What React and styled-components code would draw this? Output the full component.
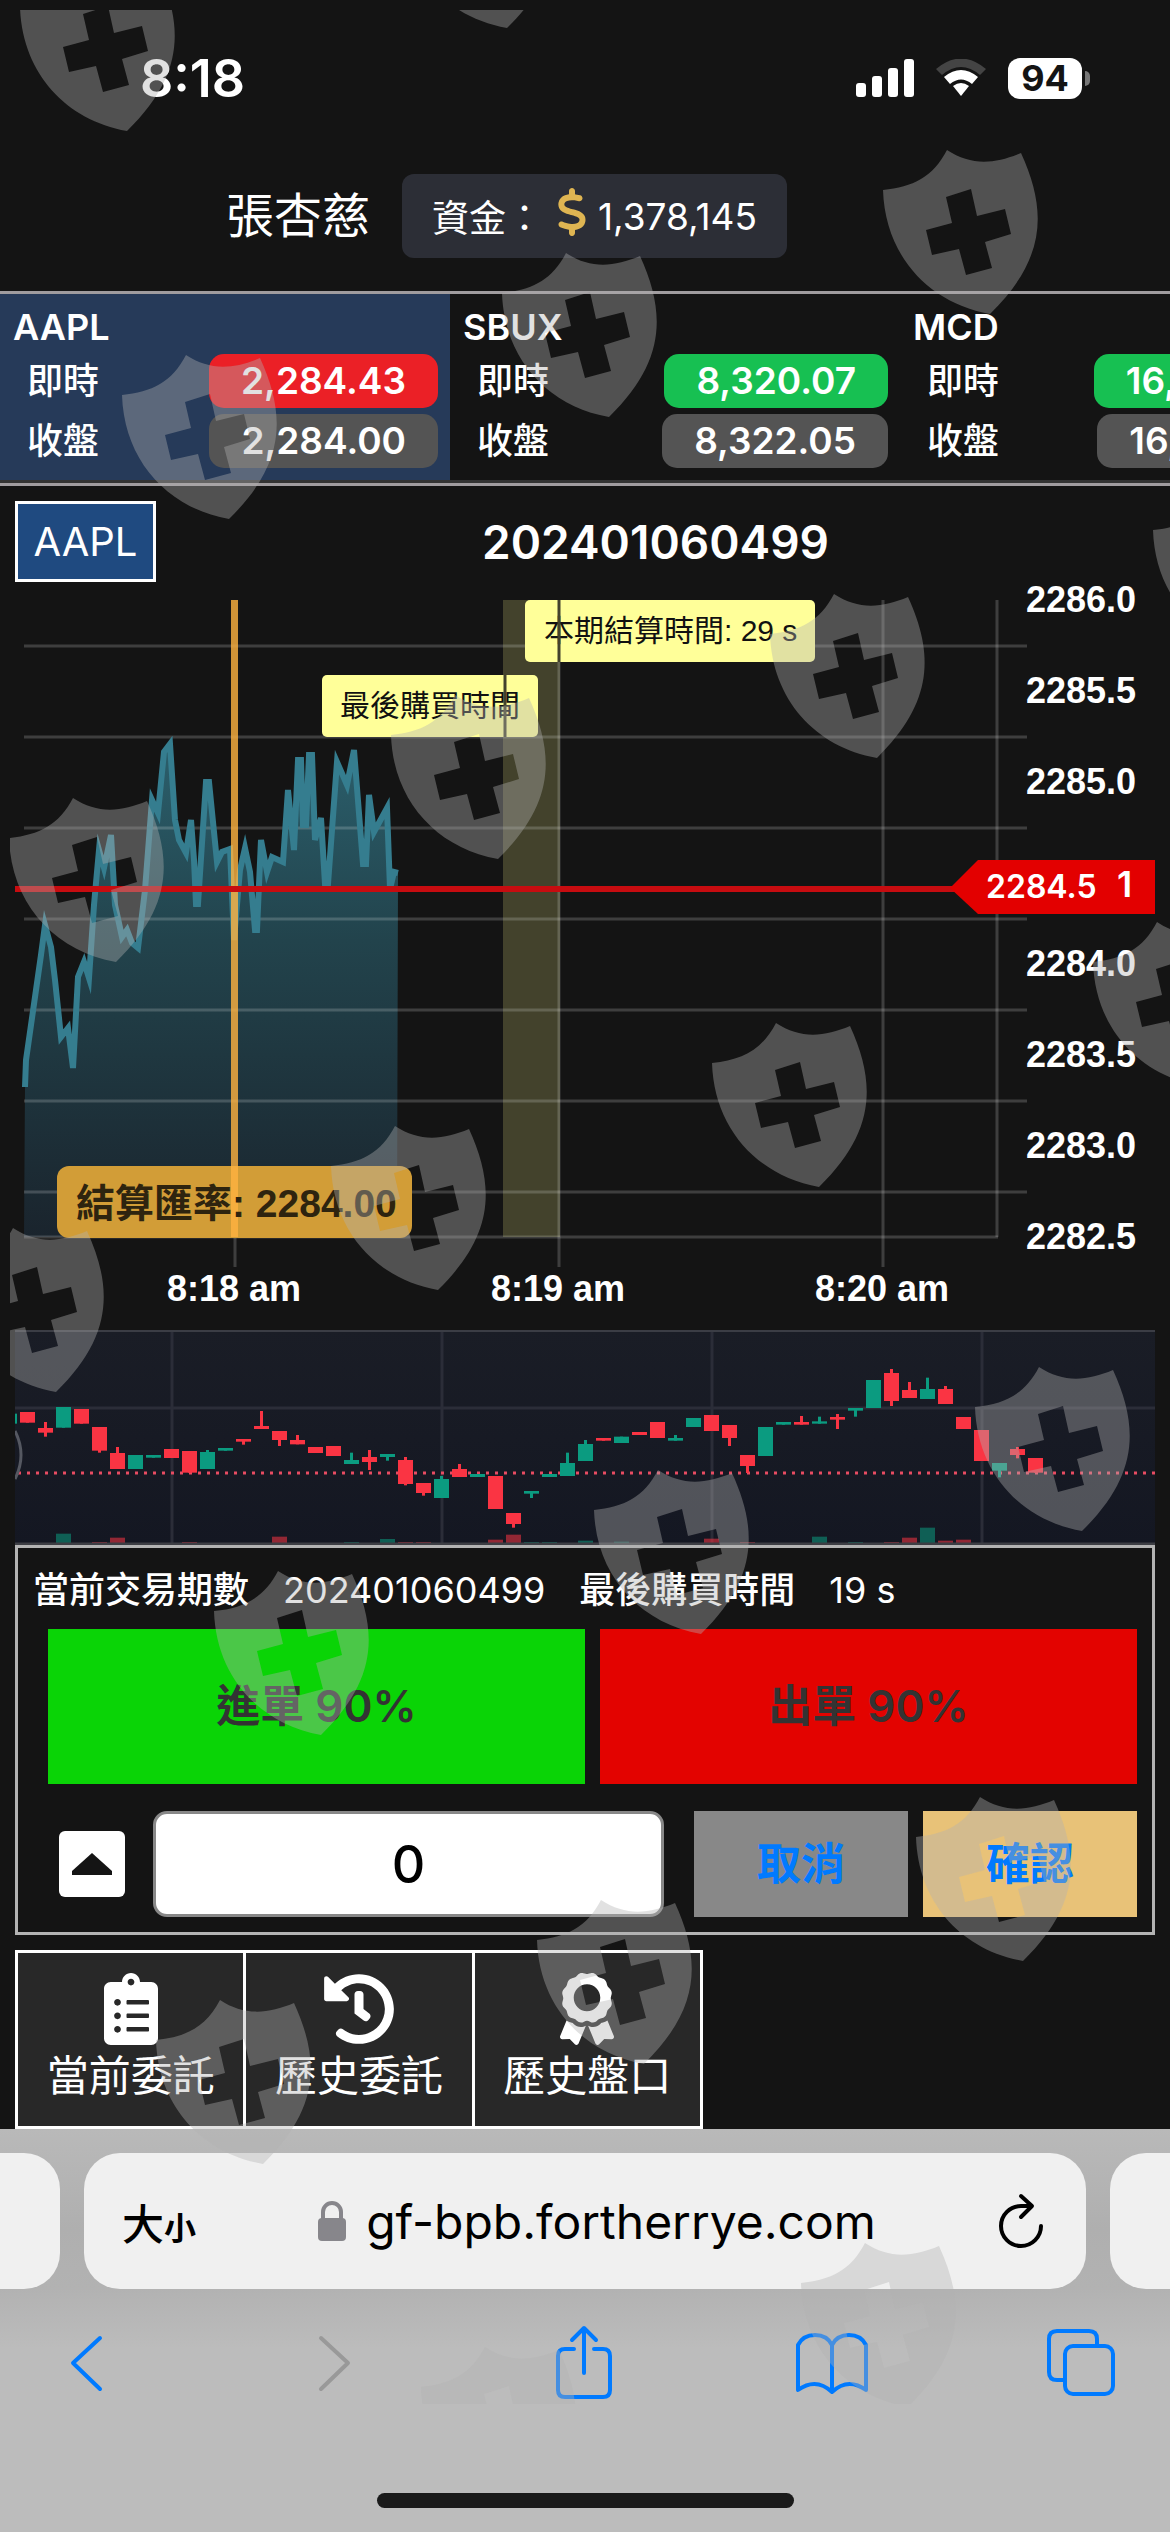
import React, { useState } from 'react';
import styled, { createGlobalStyle } from 'styled-components';
import { FaClipboardList, FaHistory, FaAward } from 'react-icons/fa';
import { FaDollarSign } from 'react-icons/fa6';

const GlobalStyle = createGlobalStyle`
  * {
    box-sizing: border-box;
  }
  body {
    margin: 0;
    background: #141414;
    color: #fff;
    font-family: Inter, 'Noto Sans CJK TC', sans-serif;
  }
  button, input {
    font-family: inherit;
    margin: 0;
    padding: 0;
    border: 0;
  }
`;

const Page = styled.div`
  position: relative;
  overflow: hidden;
`;

const Watermark = styled.svg`
  position: absolute;
  top: 10px;
  left: 10px;
  width: 100%;
  height: 2394px;
  pointer-events: none;
`;

const StatusBar = styled.div`
  display: flex;
  align-items: center;
  justify-content: space-between;
  height: 156px;
  padding: 0 88px 0 140px;
`;
const Clock = styled.span`
  font-size: 52px;
  font-weight: 600;
`;
const StatusIcons = styled.div`
  display: flex;
  align-items: center;
  gap: 22px;
`;
const Battery = styled.div`
  position: relative;
  width: 74px;
  height: 41px;
  border-radius: 12px;
  background: #fff;
  color: #141414;
  font-size: 36px;
  font-weight: 700;
  line-height: 41px;
  text-align: center;
  &:after {
    content: '';
    position: absolute;
    left: 77px;
    top: 13px;
    width: 5px;
    height: 15px;
    border-radius: 0 5px 5px 0;
    background: #777;
  }
`;

const Header = styled.header`
  display: flex;
  align-items: center;
  gap: 32px;
  padding: 18px 0 33px 226px;
`;
const UserName = styled.span`
  font-size: 48px;
  line-height: 84px;
`;
const Funds = styled.div`
  display: flex;
  align-items: center;
  height: 84px;
  padding: 0 30px;
  border-radius: 12px;
  background: #2c2e36;
  font-size: 37px;
  & svg {
    color: #dfb552;
    font-size: 48px;
    margin: 0 2px 8px 5px;
  }
`;

const TickerBar = styled.div`
  display: flex;
  overflow: hidden;
  border-top: 3px solid #a09c9f;
  border-bottom: 3px solid #a09c9f;
`;
const TickerCell = styled.div`
  flex: 0 0 450px;
  height: 189px;
  padding: 12px 12px 0 13px;
  border-bottom: 3px solid #333;
  background: ${(p) => (p.$active ? '#263a59' : '#141414')};
`;
const TickerName = styled.div`
  font-size: 36px;
  font-weight: 600;
  line-height: 42px;
  margin-bottom: 6px;
`;
const TickerRow = styled.div`
  display: flex;
  align-items: center;
  justify-content: space-between;
  height: 54px;
  margin-bottom: 6px;
  padding-left: 14px;
  font-size: 36px;
  font-weight: 500;
  line-height: 50px;
`;
const Price = styled.span`
  padding: 0 32px;
  border-radius: 15px;
  background: ${(p) => p.$bg};
  font-size: 37px;
  font-weight: 600;
  line-height: 54px;
`;

const TitleRow = styled.div`
  display: flex;
  align-items: center;
  padding: 15px 15px 0;
`;
const SymbolButton = styled.button`
  width: 141px;
  height: 81px;
  border: 3px solid #fff;
  background: #1f4a80;
  color: #fff;
  font-size: 40px;
`;
const Title = styled.h1`
  flex: 1;
  margin: 0;
  text-align: center;
  font-size: 46px;
  font-weight: 600;
  line-height: 80px;
`;

const Chart = styled.svg`
  display: block;
  width: 100%;
  & text {
    font-family: 'Liberation Sans', 'Noto Sans CJK TC', sans-serif;
  }
`;
const MiniChart = styled.svg`
  display: block;
  width: calc(100% - 30px);
  margin: 10px 15px 0;
  background: linear-gradient(#1a1d26, #141722);
`;

const OrderPanel = styled.section`
  margin: 0 15px 15px;
  padding: 18px 15px 15px;
  border: 3px solid #b3b3b3;
`;
const OrderInfo = styled.div`
  display: flex;
  gap: 34px;
  margin-bottom: 15px;
  font-size: 36px;
  line-height: 48px;
`;
const InfoLabel = styled.span`
  font-weight: 500;
`;
const Actions = styled.div`
  display: flex;
  gap: 15px;
  padding-left: 15px;
`;
const TradeButton = styled.button`
  flex: 1;
  height: 155px;
  padding-bottom: 8px;
  background: ${(p) => p.$bg};
  color: #333;
  font-size: 44px;
  font-weight: 600;
`;
const AmountRow = styled.div`
  display: flex;
  align-items: center;
  margin-top: 27px;
  padding-left: 26px;
`;
const StepButton = styled.button`
  display: flex;
  align-items: center;
  justify-content: center;
  width: 66px;
  height: 66px;
  border-radius: 6px;
  background: #fff;
`;
const Amount = styled.input`
  flex: 1;
  min-width: 0;
  height: 106px;
  margin: 0 30px 0 28px;
  border: 3px solid #888;
  border-radius: 14px;
  background: #fff;
  color: #000;
  font-size: 52px;
  font-weight: 500;
  text-align: center;
`;
const DecisionButton = styled.button`
  width: 214px;
  height: 106px;
  margin-left: ${(p) => (p.$gap ? '15px' : '0')};
  padding-bottom: 6px;
  background: ${(p) => p.$bg};
  color: #007aff;
  font-size: 44px;
  font-weight: 700;
`;

const Tabs = styled.nav`
  display: flex;
  width: 688px;
  margin-left: 15px;
  border: 3px solid #fff;
  background: #282828;
`;
const TabButton = styled.button`
  display: flex;
  flex: 1;
  flex-direction: column;
  align-items: center;
  gap: 1px;
  height: 173px;
  padding-top: 20px;
  background: none;
  color: #fff;
  font-size: 42px;
  line-height: 60px;
  & + & {
    border-left: 3px solid #fff;
  }
  & svg {
    font-size: 72px;
  }
`;

const Browser = styled.footer`
  height: 403px;
  padding-top: 24px;
  background: linear-gradient(#b9b9b9, #afafaf 100px, #b2b2b2 160px, #bcbcbc 220px);
`;
const AddressRow = styled.div`
  display: flex;
  gap: 24px;
`;
const SideTab = styled.div`
  width: 60px;
  height: 136px;
  background: #f0f0f0;
  border-radius: ${(p) => (p.$right ? '36px 0 0 36px' : '0 36px 36px 0')};
`;
const AddressBar = styled.div`
  display: flex;
  flex: 1;
  align-items: center;
  justify-content: space-between;
  height: 136px;
  padding: 0 42px 0 38px;
  border-radius: 36px;
  background: #f0f0f0;
`;
const BarButton = styled.button`
  display: flex;
  align-items: center;
  justify-content: center;
  background: none;
  color: #000;
`;
const SizeButton = styled(BarButton)`
  align-items: baseline;
  font-size: 42px;
  font-weight: 500;
  & small {
    font-size: 32px;
    font-weight: 700;
  }
`;
const UrlButton = styled(BarButton)`
  gap: 20px;
  font-size: 48px;
`;
const Toolbar = styled.div`
  display: flex;
  align-items: center;
  justify-content: space-between;
  height: 148px;
  padding: 0 52px 0 49px;
`;
const ToolButton = styled(BarButton)`
  width: 74px;
`;
const HomeIndicator = styled.div`
  width: 417px;
  height: 15px;
  margin: 56px auto 0;
  border-radius: 8px;
  background: #1a1a1a;
`;

const tickers = [
  { name: 'AAPL', now: '2,284.43', close: '2,284.00', color: '#eb2026' },
  { name: 'SBUX', now: '8,320.07', close: '8,322.05', color: '#17c052' },
  { name: 'MCD', now: '16,480.26', close: '16,478.23', color: '#17c052' },
];

const shields = [
  [20, -33], [400, -136], [883, 150], [502, 253], [122, 355], [1153, 490], [9, 798],
  [391, 695], [770, 594], [712, 1023], [1093, 922], [331, 1126], [-51, 1228], [975, 1367],
  [594, 1470], [214, 1571], [916, 1797], [537, 1900], [156, 2000], [801, 2243], [421, 2347],
];

const series = [
  [25, 1087], [26, 1060], [36, 990], [41, 955], [45, 925], [51, 947], [55, 980], [61, 1037], [68, 1028],
  [73, 1068], [78, 977], [84, 962], [89, 978], [94, 905], [99, 850], [104, 868], [111, 835],
  [115, 905], [122, 937], [127, 930], [132, 943], [138, 948], [145, 890], [152, 800], [158, 813],
  [164, 752], [170, 744], [175, 820], [179, 840], [186, 853], [191, 820], [194, 860], [196, 904],
  [198, 904], [206, 782], [209, 782], [217, 862], [222, 852], [230, 849], [234, 940], [240, 870],
  [245, 848], [250, 872], [255, 930], [257, 930], [261, 840], [267, 872], [272, 857], [283, 862],
  [288, 790], [294, 850], [298, 760], [301, 760], [303, 825], [306, 825], [309, 755], [312, 755],
  [315, 840], [321, 818], [325, 884], [328, 884], [337, 762], [347, 785], [354, 750], [363, 864],
  [366, 864], [369, 795], [374, 832], [387, 808], [390, 889], [394, 872], [398, 873],
];

// colour, open/close band, then high and low, in thirds of a pixel
const candles = [
  ['g', 281, 311], ['r', 276, 308], ['r', 324, 338, 306, 350], ['g', 261, 323], ['r', 267, 311],
  ['r', 321, 392, 321, 398], ['r', 399, 447, 381], ['g', 405, 447], ['g', 405, 413], ['r', 387, 414],
  ['r', 393, 458], ['g', 396, 447, 390], ['g', 384, 392], ['r', 357, 365, 357, 374],
  ['r', 318, 327, 273], ['r', 333, 360, 333, 378], ['r', 360, 373, 345], ['r', 381, 399],
  ['r', 378, 408], ['g', 420, 432, 398], ['r', 411, 426, 390, 450], ['g', 402, 411, 402, 422],
  ['r', 420, 492, 411, 496], ['r', 489, 519, 489, 527], ['g', 477, 534, 468], ['r', 447, 471, 432],
  ['g', 462, 471], ['r', 468, 567], ['r', 579, 612, 579, 623], ['g', 513, 521, 513, 534],
  ['g', 462, 471], ['g', 429, 468, 398], ['g', 372, 423, 360], ['r', 354, 362], ['g', 350, 369],
  ['r', 336, 345], ['r', 306, 354], ['g', 354, 362, 345], ['g', 294, 321], ['r', 285, 333],
  ['r', 315, 354, 315, 378], ['r', 405, 438, 405, 459], ['g', 321, 408], ['g', 306, 314],
  ['r', 306, 314, 288], ['g', 304, 311, 290], ['r', 291, 299, 282, 327], ['g', 264, 272, 264, 290],
  ['g', 180, 264], ['r', 159, 243, 147, 258], ['r', 210, 234, 186], ['g', 207, 237, 173],
  ['r', 207, 252, 198], ['r', 291, 327], ['r', 330, 423], ['g', 429, 452, 429, 472],
  ['r', 387, 405, 381, 415], ['r', 414, 458],
];

const volumes = [
  [2, 'g', 28], [4, 'r', 3], [5, 'r', 16], [9, 'r', 3], [14, 'r', 19], [18, 'g', 3], [20, 'g', 12],
  [21, 'r', 3], [22, 'r', 3], [26, 'r', 10], [27, 'r', 25], [28, 'g', 3], [29, 'g', 3], [31, 'g', 7],
  [33, 'g', 4], [38, 'r', 13], [40, 'r', 3], [44, 'g', 19], [46, 'g', 3], [48, 'r', 3],
  [49, 'r', 16], [50, 'g', 46], [51, 'r', 7], [52, 'r', 10],
];

const priceLabels = ['2286.0', '2285.5', '2285.0', null, '2284.0', '2283.5', '2283.0', '2282.5'];
const gridLines = [646, 737, 828, 919, 1010, 1101, 1192];
const candleColor = { g: '#0b9b80', r: '#fa3443' };

const PriceChart = () => {
  const line = series.map((p) => p.join(',')).join(' ');
  return (
    <Chart viewBox="0 582 1170 738">
      <defs>
        <linearGradient id="area" gradientUnits="userSpaceOnUse" x1="0" y1="744" x2="0" y2="1237">
          <stop offset="0" stopColor="#2b5f6c" />
          <stop offset="0.4" stopColor="#22434c" />
          <stop offset="1" stopColor="#1a242d" />
        </linearGradient>
      </defs>
      <rect x="503" y="600" width="57" height="637" fill="#43422c" />
      <polygon points={`24,1237 ${line} 397,1237`} fill="url(#area)" />
      <g stroke="#fff" strokeOpacity="0.18" strokeWidth="3">
        {gridLines.map((y) => (
          <line key={y} x1="24" x2="1027" y1={y} y2={y} />
        ))}
        <line x1="24" x2="998" y1="1237" y2="1237" />
        <line x1="235" x2="235" y1="1238" y2="1267" />
        <line x1="559" x2="559" y1="600" y2="1267" />
        <line x1="883" x2="883" y1="600" y2="1267" />
        <line x1="997" x2="997" y1="600" y2="1237" />
      </g>
      <polyline points={line} fill="none" stroke="#357d8f" strokeWidth="6" strokeMiterlimit="6" />
      <g fill="#ffff99">
        <rect x="525" y="600" width="290" height="62" rx="5" />
        <rect x="322" y="675" width="216" height="62" rx="5" />
      </g>
      <g fill="#111" fontSize="30">
        <text x="544" y="641">本期結算時間: 29 s</text>
        <text x="340" y="716">最後購買時間</text>
      </g>
      <g stroke="#43422c" strokeWidth="3">
        <line x1="559" x2="559" y1="600" y2="662" />
        <line x1="505" x2="505" y1="675" y2="737" />
      </g>
      <rect x="57" y="1166" width="355" height="72" rx="12" fill="#d29d37" />
      <rect x="231" y="600" width="7" height="637" fill="#ffb340" fillOpacity="0.8" />
      <text x="76" y="1217" fontSize="39" fontWeight="700" fill="#2e240f">結算匯率: 2284.00</text>
      <line x1="15" x2="960" y1="889" y2="889" stroke="#c70c10" strokeWidth="6" />
      <polygon points="950,888 978,860 1155,860 1155,914 978,914" fill="#e30000" />
      <g fill="#fff" fontSize="36" fontWeight="700">
        {priceLabels.map((label, i) =>
          label ? (
            <text key={label} x="1026" y={612 + i * 91}>{label}</text>
          ) : null
        )}
        <g textAnchor="middle">
          <text x="234" y="1301">8:18 am</text>
          <text x="558" y="1301">8:19 am</text>
          <text x="882" y="1301">8:20 am</text>
        </g>
      </g>
      <g fill="#fff">
        <text x="986" y="898" fontWeight="600" fontSize="32" style={{ fontFamily: 'Inter' }}>2284.5</text>
        <text x="1117" y="897" fontWeight="600" fontSize="36" style={{ fontFamily: 'Inter' }}>1</text>
      </g>
    </Chart>
  );
};

const CandleChart = () => (
  <MiniChart viewBox="15 1330 1140 215">
    <g stroke="#2b2d38" strokeWidth="3">
      <line x1="15" x2="1155" y1="1408" y2="1408" />
      {[172, 442, 712, 982].map((x) => (
        <line key={x} x1={x} x2={x} y1="1332" y2="1543" />
      ))}
    </g>
    <line x1="15" x2="1155" y1="1331" y2="1331" stroke="#3b3d45" strokeWidth="2" />
    <line x1="18" x2="1155" y1="1473" y2="1473" stroke="#e84c62" strokeWidth="3" strokeDasharray="3 6" />
    {volumes.map(([i, c, h]) => (
      <rect key={i} x={20 + i * 18} y={1543 - h / 3} width="15" height={h / 3} fill={candleColor[c]} opacity="0.55" />
    ))}
    {candles.map(([c, top, bottom, high = top, low = bottom], i) => (
      <g key={i} fill={candleColor[c]}>
        <rect x={2 + i * 18} y={1320 + top / 3} width="15" height={(bottom - top) / 3} />
        <rect x={8 + i * 18} y={1320 + high / 3} width="3" height={(low - high) / 3} />
      </g>
    ))}
    <path d="M15 1431 Q27 1455 15 1479" fill="none" stroke="#555861" strokeWidth="3" />
    <line x1="15" x2="1155" y1="1544" y2="1544" stroke="#3d3e44" strokeWidth="3" />
  </MiniChart>
);

const ShieldPattern = () => (
  <Watermark aria-hidden="true">
    <g fill="rgb(177,177,177)" fillOpacity="0.39" fillRule="evenodd">
      {shields.map(([x, y]) => (
        <path
          key={`${x}-${y}`}
          transform={`translate(${x - 10} ${y - 10})`}
          d="M0 40C30 37 50 27 64 0C88 16 112 14 138 3C164 60 164 108 107 164C45 153 2 105 0 40ZM63 47L88 39L94 66L122 59L128 84L102 92L109 118L83 125L76 99L49 105L43 80L69 73Z"
        />
      ))}
    </g>
  </Watermark>
);

const App = () => {
  const [amount, setAmount] = useState('0');

  return (
    <Page lang="zh-Hant">
      <GlobalStyle />
      <StatusBar>
        <Clock>8:18</Clock>
        <StatusIcons>
          <svg width="58" height="38" fill="#fff">
            <rect x="0" y="24" width="10" height="14" rx="3" />
            <rect x="16" y="17" width="10" height="21" rx="3" />
            <rect x="32" y="9" width="10" height="29" rx="3" />
            <rect x="48" y="0" width="10" height="38" rx="3" />
          </svg>
          <svg width="50" height="38" viewBox="0 0 50 38">
            <path d="M0 10Q25 -11 50 10L44 16Q25 0 6 16Z" fill="#444" />
            <path d="M8 18Q25 4 42 18L36 25Q25 16 14 25Z" fill="#fff" />
            <path d="M17 27Q25 21 33 27L25 37Z" fill="#fff" />
          </svg>
          <Battery>94</Battery>
        </StatusIcons>
      </StatusBar>
      <Header>
        <UserName>張杏慈</UserName>
        <Funds>
          資金：
          <FaDollarSign />
          1,378,145
        </Funds>
      </Header>
      <TickerBar>
        {tickers.map((t, i) => (
          <TickerCell key={t.name} $active={i === 0}>
            <TickerName>{t.name}</TickerName>
            <TickerRow>
              即時
              <Price $bg={t.color}>{t.now}</Price>
            </TickerRow>
            <TickerRow>
              收盤
              <Price $bg="#545454">{t.close}</Price>
            </TickerRow>
          </TickerCell>
        ))}
      </TickerBar>
      <TitleRow>
        <SymbolButton>AAPL</SymbolButton>
        <Title>202401060499</Title>
      </TitleRow>
      <PriceChart />
      <CandleChart />
      <OrderPanel>
        <OrderInfo>
          <InfoLabel>當前交易期數</InfoLabel>
          <span>202401060499</span>
          <InfoLabel>最後購買時間</InfoLabel>
          <span>19 s</span>
        </OrderInfo>
        <Actions>
          <TradeButton $bg="#0ad406">進單 90%</TradeButton>
          <TradeButton $bg="#e30300">出單 90%</TradeButton>
        </Actions>
        <AmountRow>
          <StepButton aria-label="增加">
            <svg width="40" height="22">
              <path d="M20 0L40 18V22H0V18Z" fill="#141414" />
            </svg>
          </StepButton>
          <Amount aria-label="金額" value={amount} onChange={(e) => setAmount(e.target.value)} />
          <DecisionButton $bg="#888">取消</DecisionButton>
          <DecisionButton $bg="#e8c278" $gap>確認</DecisionButton>
        </AmountRow>
      </OrderPanel>
      <Tabs>
        <TabButton>
          <FaClipboardList />
          當前委託
        </TabButton>
        <TabButton>
          <FaHistory />
          歷史委託
        </TabButton>
        <TabButton>
          <FaAward />
          歷史盤口
        </TabButton>
      </Tabs>
      <Browser>
        <AddressRow>
          <SideTab />
          <AddressBar>
            <SizeButton>
              大<small>小</small>
            </SizeButton>
            <UrlButton>
              <svg width="28" height="40" viewBox="0 0 28 40">
                <rect x="0" y="17" width="28" height="23" rx="4" fill="#87868b" />
                <path d="M5 18V11a9 9 0 0 1 18 0V18" fill="none" stroke="#87868b" strokeWidth="4" />
              </svg>
              gf-bpb.fortherrye.com
            </UrlButton>
            <BarButton aria-label="重新載入">
              <svg width="46" height="56" viewBox="0 0 46 56" fill="none" stroke="#000" strokeWidth="4" strokeLinecap="round" strokeLinejoin="round">
                <path d="M43 33A20 20 0 1 1 23 13H33" />
                <path d="M23 3L34 13L23 24" />
              </svg>
            </BarButton>
          </AddressBar>
          <SideTab $right />
        </AddressRow>
        <Toolbar>
          <ToolButton aria-label="上一頁">
            <svg width="40" height="60" viewBox="0 0 40 60" fill="none" stroke="#007aff" strokeWidth="4" strokeLinecap="round" strokeLinejoin="round">
              <path d="M34 5L7 30L34 56" />
            </svg>
          </ToolButton>
          <ToolButton aria-label="下一頁">
            <svg width="40" height="60" viewBox="0 0 40 60" fill="none" stroke="#999" strokeWidth="4" strokeLinecap="round" strokeLinejoin="round">
              <path d="M6 5L33 30L6 56" />
            </svg>
          </ToolButton>
          <ToolButton aria-label="分享">
            <svg width="60" height="76" viewBox="0 0 60 76" fill="none" stroke="#007aff" strokeWidth="4" strokeLinecap="round" strokeLinejoin="round">
              <path d="M20 24H11Q4 24 4 31V65Q4 72 11 72H49Q56 72 56 65V31Q56 24 49 24H40" />
              <path d="M30 48V4M18 15L30 3L42 15" />
            </svg>
          </ToolButton>
          <ToolButton aria-label="書籤">
            <svg width="74" height="64" viewBox="0 0 74 64" fill="none" stroke="#007aff" strokeWidth="4" strokeLinecap="round" strokeLinejoin="round">
              <path d="M37 61Q21 46 3 59V14Q8 4 20 4Q32 4 37 14Q42 4 54 4Q66 4 71 14V59Q53 46 37 61V14" />
            </svg>
          </ToolButton>
          <ToolButton aria-label="分頁">
            <svg width="70" height="70" viewBox="0 0 70 70" fill="none" stroke="#007aff" strokeWidth="4" strokeLinejoin="round">
              <path d="M18 52H11Q3 52 3 44V11Q3 3 11 3H43Q51 3 51 11V17" />
              <rect x="19" y="18" width="48" height="48" rx="8" />
            </svg>
          </ToolButton>
        </Toolbar>
        <HomeIndicator />
      </Browser>
      <ShieldPattern />
    </Page>
  );
};

export default App;
